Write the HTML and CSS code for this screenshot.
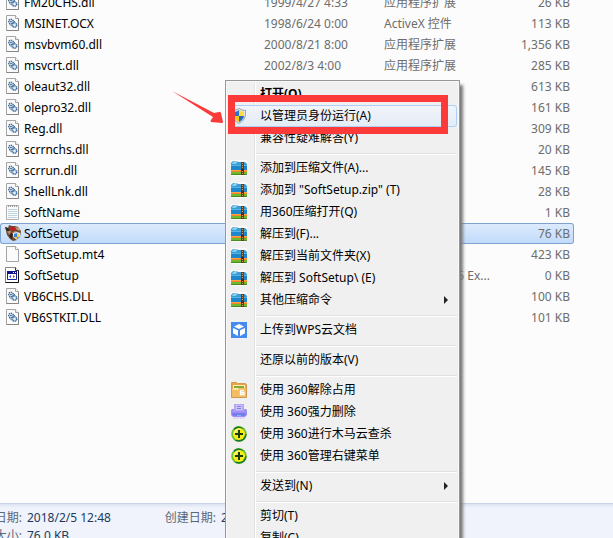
FILE: index.html
```html
<!DOCTYPE html>
<html lang="zh-CN">
<head>
<meta charset="utf-8">
<title>SoftSetup</title>
<link rel="stylesheet" href="styles.css">
</head>
<body>
<svg class="sprite" aria-hidden="true">
  <symbol id="dll" viewBox="0 0 16 16">
    <path d="M1.500 .5h9l3 3v12h-12z" fill="#fafafa" stroke="#a5a5a5"/>
    <path d="M1.500 15.500h12v-12" fill="none" stroke="#858585"/>
    <path d="M10.500 .5v3h3" fill="#fff" stroke="#a5a5a5"/>
    <circle cx="6" cy="6.500" r="2.300" fill="#dbe9f5" stroke="#376493" stroke-width="1.300" stroke-dasharray="1.300 .6"/>
    <circle cx="6" cy="6.500" r=".8" fill="#264e80"/>
    <circle cx="9.500" cy="10" r="2.300" fill="#b9d5ed" stroke="#376493" stroke-width="1.300" stroke-dasharray="1.300 .6"/>
    <circle cx="9.500" cy="10" r=".8" fill="#fff"/>
    <path d="M4.500 9l2.500 2.500M8.500 5.500l1.500 1.500" stroke="#4779a9"/>
  </symbol>
  <symbol id="note" viewBox="0 0 16 16">
    <path d="M1.500 1.500h12v14h-12z" fill="#fafafa" stroke="#b0b0b0"/>
    <path d="M3.500 1v2m2-2v2m2-2v2m2-2v2m2-2v2" stroke="#9b9b9b"/>
    <path d="M3 5.500h9M3 7.500h9M3 9.500h9M3 11.500h9M3 13.500h9" stroke="#bed5dc"/>
  </symbol>
  <symbol id="blank" viewBox="0 0 16 16">
    <path d="M1.500 .5h9l3 3v12h-12z" fill="#fbfbfb" stroke="#a5a5a5"/>
    <path d="M10.500 .5v3h3" fill="#fff" stroke="#a5a5a5"/>
  </symbol>
  <symbol id="setup" viewBox="0 0 16 16">
    <path d="M0 2l3 1 1-3 3 1 3 0 3 1 3 4-1 6-3 3-4 1-3-2-3-4z" fill="#6f4933"/>
    <path d="M2 5l4 1-1 4-2-2zM7 8l3-2 3 1-2 4-3 2z" fill="#b38b68"/>
    <path d="M6 2l3 0 2 3-3 1-2-2-2 1z" fill="#c91920"/>
    <path d="M0 2l3 1 2 3-3 0zM6 8l2 1-1 5-3-3z" fill="#2b2524"/>
    <path d="M10 2l4 1 2 3-4-1z" fill="#c59b78"/>
    <path d="M12 7l3 1v3q-1 3-3 4-3-2-4-4V8z" fill="#dce8f3"/>
    <path d="M12 8v4H9V9z" fill="#3981dc"/><path d="M12 8l2 1v3h-2z" fill="#f5d43d"/>
    <path d="M9 12h3v2q-2-1-3-2z" fill="#f4cb30"/><path d="M12 12h2q-1 2-2 2z" fill="#3981dc"/>
  </symbol>
  <symbol id="config" viewBox="0 0 16 16">
    <path d="M.5 .5h10l3 3v12H.5z" fill="#fff" stroke="#888"/>
    <path d="M13.500 3v12.500H.5" fill="none" stroke="#111"/>
    <path d="M10.500 .5v3h3" fill="#fff" stroke="#333"/>
    <path d="M2.500 4.500h9v8h-9z" fill="#fff" stroke="#16239c"/>
    <path d="M2 4h10v3H2z" fill="#10138c"/><path d="M8 5.500h1m1 0h1" stroke="#fff"/>
    <path d="M6 8v3L4 9.500z" fill="#194bd1"/><path d="M8 8v3l2-1.500z" fill="#e02b2b"/>
  </symbol>
  <symbol id="zip" viewBox="0 0 16 16">
    <path d="M0 0h16v16H0z" fill="#fafafa"/>
    <path d="M0 3l2-2h4l1 1h7l2 2v2H0z" fill="#3b9dd5"/>
    <path d="M2 2l2-1h2v2L4 4H1z" fill="#8dd0ee"/>
    <path d="M0 5h16v5H0z" fill="#1f86cc"/><path d="M0 5h16v1H0z" fill="#55b5e2"/>
    <path d="M0 10h16v2H0z" fill="#f5822a"/><path d="M0 10h16v1H0z" fill="#f9a63e"/>
    <path d="M0 12h16v3H0z" fill="#70b92c"/><path d="M0 14h16v1H0z" fill="#4a8f1d"/>
    <path d="M10 2h3v13h-3z" fill="#6d3a1e"/>
    <path d="M11.500 3v12" stroke="#c99a5c" stroke-dasharray="1 1"/>
    <path d="M10 9h3v2h-3z" fill="#4a2a1c"/>
  </symbol>
  <symbol id="shield" viewBox="0 0 16 16">
    <path d="M8 0q3 2 7 2v5q-1 6-7 9Q2 13 1 7V2q4 0 7-2z" fill="#a0a8ae"/>
    <path d="M8 1q3 2 6 2v4q-1 5-6 8Q3 12 2 7V3q3 0 6-2z" fill="#e3e8eb"/>
    <path d="M8 2v6H3V4q3 0 5-2z" fill="#2776cc"/><path d="M8 2q2 2 5 2v4H8z" fill="#ffdc39"/>
    <path d="M3 8h5v6Q4 12 3 8z" fill="#f9c918"/><path d="M8 8h5q-1 4-5 6z" fill="#2468b9"/>
  </symbol>
  <symbol id="wps" viewBox="0 0 16 16">
    <path d="M0 0h16v16H0z" fill="#458af1"/>
    <path d="M8 2l5 2.500-5 2.500-5-2.500zM2 6l5 2.300V14l-5-2.800zM14 6L9 8.300V14l5-2.800z" fill="#fff"/>
  </symbol>
  <symbol id="folder" viewBox="0 0 16 16">
    <path d="M.5 1.500V.5h5l1 1h8l1 1v13H.5z" fill="#eda344" stroke="#d19a50"/>
    <path d="M2 3h12v4H2z" fill="#f9eeb8"/><path d="M3 4h10v2H3z" fill="#84ac35"/>
    <path d="M1 7h6l1-1h7v9H1z" fill="#f4be60"/><path d="M1 7.500h6" stroke="#ffe29c"/>
    <path d="M13 8.500H9.500v4H13v-2H9.500" fill="none" stroke="#fff" stroke-width="1.300"/>
  </symbol>
  <symbol id="shred" viewBox="0 0 16 16">
    <path d="M3 0h10v8H3z" fill="#b3a8f5"/><path d="M5 1h6v5H5z" fill="#cac3ff"/>
    <path d="M6 2h4v1H6zM6 4h4v1H6z" fill="#8a7be1"/>
    <path d="M1 5h2v2h10V5h2l1 1v5l-2 2H2l-2-2V6z" fill="#9c91f5"/>
    <path d="M1 9h14v2l-2 1H3l-2-1z" fill="#7f77ea"/><path d="M6 11h4v1H6z" fill="#55cdfc"/>
    <path d="M3.500 13v2m3-2v2m3-2v2m3-2v2" stroke="#d5ceff" stroke-width="2"/>
  </symbol>
  <symbol id="safe" viewBox="0 0 16 16">
    <circle cx="8" cy="8" r="7.800" fill="#6cc32a"/>
    <path d="M3 2Q8-2 13 3L8 2Q4 3 3 5zM15.500 8q0 7-7.500 7.800-3 0-5-2 7 1 10-5z" fill="#167c25"/>
    <circle cx="8" cy="8" r="6" fill="#f7ec19"/>
    <path d="M3 7q1-5 7-4-4 0-6 4z" fill="#fffcb0"/>
    <path d="M8 4v8M4 8h8" stroke="#173d10" stroke-width="2"/>
  </symbol>
</svg>

<div class="window">
  <main class="files">
    <table class="file-table">
      <colgroup><col class="col-name"><col class="col-date"><col class="col-type"><col></colgroup>
      <tbody>
        <tr><td><svg class="icon"><use href="#dll"/></svg>FM20CHS.dll</td><td>1999/4/27 4:33</td><td>应用程序扩展</td><td>26 KB</td></tr>
        <tr><td><svg class="icon"><use href="#dll"/></svg>MSINET.OCX</td><td>1998/6/24 0:00</td><td>ActiveX 控件</td><td>113 KB</td></tr>
        <tr><td><svg class="icon"><use href="#dll"/></svg>msvbvm60.dll</td><td>2000/8/21 8:00</td><td>应用程序扩展</td><td>1,356 KB</td></tr>
        <tr><td><svg class="icon"><use href="#dll"/></svg>msvcrt.dll</td><td>2002/8/3 4:00</td><td>应用程序扩展</td><td>285 KB</td></tr>
        <tr><td><svg class="icon"><use href="#dll"/></svg>oleaut32.dll</td><td></td><td></td><td>613 KB</td></tr>
        <tr><td><svg class="icon"><use href="#dll"/></svg>olepro32.dll</td><td></td><td></td><td>161 KB</td></tr>
        <tr><td><svg class="icon"><use href="#dll"/></svg>Reg.dll</td><td></td><td></td><td>309 KB</td></tr>
        <tr><td><svg class="icon"><use href="#dll"/></svg>scrrnchs.dll</td><td></td><td></td><td>20 KB</td></tr>
        <tr><td><svg class="icon"><use href="#dll"/></svg>scrrun.dll</td><td></td><td></td><td>145 KB</td></tr>
        <tr><td><svg class="icon"><use href="#dll"/></svg>ShellLnk.dll</td><td></td><td></td><td>28 KB</td></tr>
        <tr><td><svg class="icon"><use href="#note"/></svg>SoftName</td><td></td><td></td><td>1 KB</td></tr>
        <tr class="selected"><td><svg class="icon"><use href="#setup"/></svg>SoftSetup</td><td></td><td></td><td>76 KB</td></tr>
        <tr><td><svg class="icon"><use href="#blank"/></svg>SoftSetup.mt4</td><td></td><td></td><td>423 KB</td></tr>
        <tr><td><svg class="icon"><use href="#config"/></svg>SoftSetup</td><td></td><td class="type-end">5 Ex...</td><td>0 KB</td></tr>
        <tr><td><svg class="icon"><use href="#dll"/></svg>VB6CHS.DLL</td><td></td><td></td><td>100 KB</td></tr>
        <tr><td><svg class="icon"><use href="#dll"/></svg>VB6STKIT.DLL</td><td></td><td></td><td>101 KB</td></tr>
      </tbody>
    </table>
  </main>

  <footer class="details">
    <dl class="facts">
      <dt>修改日期:</dt><dd>2018/2/5 12:48</dd>
      <dt>创建日期:</dt><dd>2018</dd>
      <dt>大小:</dt><dd>76.0 KB</dd>
    </dl>
  </footer>

  <div class="menu" role="menu">
    <button class="item default" role="menuitem"><span class="slot"></span>打开(O)</button>
    <button class="item active" role="menuitem"><span class="slot"><svg class="icon"><use href="#shield"/></svg></span>以管理员身份运行(A)</button>
    <button class="item" role="menuitem"><span class="slot"></span>兼容性疑难解答(Y)</button>
    <hr>
    <button class="item" role="menuitem"><span class="slot"><svg class="icon"><use href="#zip"/></svg></span>添加到压缩文件(A)...</button>
    <button class="item" role="menuitem"><span class="slot"><svg class="icon"><use href="#zip"/></svg></span>添加到 "SoftSetup.zip" (T)</button>
    <button class="item" role="menuitem"><span class="slot"><svg class="icon"><use href="#zip"/></svg></span>用360压缩打开(Q)</button>
    <button class="item" role="menuitem"><span class="slot"><svg class="icon"><use href="#zip"/></svg></span>解压到(F)...</button>
    <button class="item" role="menuitem"><span class="slot"><svg class="icon"><use href="#zip"/></svg></span>解压到当前文件夹(X)</button>
    <button class="item" role="menuitem"><span class="slot"><svg class="icon"><use href="#zip"/></svg></span>解压到 SoftSetup\ (E)</button>
    <button class="item submenu" role="menuitem"><span class="slot"><svg class="icon"><use href="#zip"/></svg></span>其他压缩命令</button>
    <hr>
    <button class="item" role="menuitem"><span class="slot"><svg class="icon"><use href="#wps"/></svg></span>上传到WPS云文档</button>
    <hr>
    <button class="item" role="menuitem"><span class="slot"></span>还原以前的版本(V)</button>
    <hr>
    <button class="item" role="menuitem"><span class="slot"><svg class="icon"><use href="#folder"/></svg></span>使用 360解除占用</button>
    <button class="item" role="menuitem"><span class="slot"><svg class="icon"><use href="#shred"/></svg></span>使用 360强力删除</button>
    <button class="item" role="menuitem"><span class="slot"><svg class="icon"><use href="#safe"/></svg></span>使用 360进行木马云查杀</button>
    <button class="item" role="menuitem"><span class="slot"><svg class="icon"><use href="#safe"/></svg></span>使用 360管理右键菜单</button>
    <hr>
    <button class="item submenu" role="menuitem"><span class="slot"></span>发送到(N)</button>
    <hr>
    <button class="item" role="menuitem"><span class="slot"></span>剪切(T)</button>
    <button class="item" role="menuitem"><span class="slot"></span>复制(C)</button>
  </div>

  <div class="callout"></div>
  <svg class="arrow" viewBox="0 0 52 34" aria-hidden="true"><path d="M0 0l42 22 5-1q1-1 2 1l2 9q0 1-1 1l-11-1q-1-1 0-2l2-3z" fill="#fd3a3a"/></svg>
</div>
</body>
</html>
```

FILE: styles.css
```css
* { box-sizing: border-box; }

body {
  margin: 0;
  font: 12px/20px "Noto Sans", "Noto Sans CJK SC", sans-serif;
  color: #000;
  background: #fcfcfc;
}

.sprite { position: absolute; width: 0; height: 0; }

.window {
  position: relative;
  display: flex;
  flex-direction: column;
  height: 100vh;
  overflow: hidden;
}

.icon { width: 16px; height: 16px; flex: none; }

/* File list, scrolled part-way through its first row */
.files { flex: 1; min-height: 0; }

.file-table {
  width: calc(100% - 39px);
  margin-top: -8px;
  table-layout: fixed;
  border-collapse: separate;
  border-spacing: 0;
}

.col-name { width: 260px; }
.col-date { width: 120px; }
.col-type { width: 114px; }

.file-table td {
  height: 21px;
  padding: 0 4px;
  line-height: 19px;
  white-space: nowrap;
  color: #6d6d6d;
  border: solid transparent;
  border-width: 1px 0;
}
.file-table td:first-child { color: #000; border-left-width: 1px; padding-left: 4px; }
.file-table td:last-child { text-align: right; border-right-width: 1px; padding-right: 3px; }
.file-table .icon { margin: 1px 3px 0 0; vertical-align: top; }
.file-table .type-end { text-align: right; }

.file-table .selected td {
  border-color: #7da2ce;
  background: linear-gradient(#dcebfc, #c1dbfc) padding-box;
}
.file-table .selected td:first-child { border-radius: 3px 0 0 3px; }
.file-table .selected td:last-child { border-radius: 0 3px 3px 0; }

/* Details pane */
.details {
  flex: 0 0 35px;
  overflow: hidden;
  border-top: 1px solid #c6d3e6;
  background: linear-gradient(#dbe4f2, #f0f3fb 4px);
}

.facts {
  display: grid;
  grid-template-columns: 56px 128px 56px 128px;
  column-gap: 5px;
  grid-auto-rows: 18px;
  margin: 5px 0 0 -34px;
  line-height: 18px;
}
.facts dt { text-align: right; color: #5a6779; }
.facts dd { margin: 0; color: #1e395b; }

/* Context menu */
.menu {
  position: absolute;
  top: 80px;
  left: 225px;
  width: 235px;
  padding: 2px;
  border: 1px solid #979797;
  background: linear-gradient(90deg, transparent 28px, #e2e3e3 28px 29px, #fff 29px 30px, transparent 30px) #f0f0f0;
  box-shadow: inset 0 0 0 1px #f8f8f8, 4px 4px 3px -1px #777;
}

.item {
  display: flex;
  align-items: center;
  width: 100%;
  height: 22px;
  padding: 0 8px 0 2px;
  border: 1px solid transparent;
  border-radius: 3px;
  background: none;
  font: inherit;
  color: inherit;
  text-align: left;
  white-space: nowrap;
}
.slot { display: flex; flex: none; width: 29px; }
.default { font-weight: bold; }
.active {
  border-color: #aecff7;
  background: linear-gradient(rgba(241, 245, 251, .9), rgba(226, 235, 247, .9));
}
.submenu::after {
  content: "";
  margin-left: auto;
  border: 4px solid transparent;
  border-left-color: #222;
  border-right-width: 0;
}

.menu hr {
  height: 2px;
  margin: 4px 0 2px 28px;
  border: 0;
  border-top: 1px solid #e0e0e0;
  background: #fff;
}

/* Annotation over the menu */
.callout {
  position: absolute;
  top: 95px;
  left: 228px;
  width: 220px;
  height: 39px;
  border: 7px solid #fd3a3a;
}

.arrow {
  position: absolute;
  top: 91px;
  left: 172px;
  width: 52px;
  height: 34px;
}
```
